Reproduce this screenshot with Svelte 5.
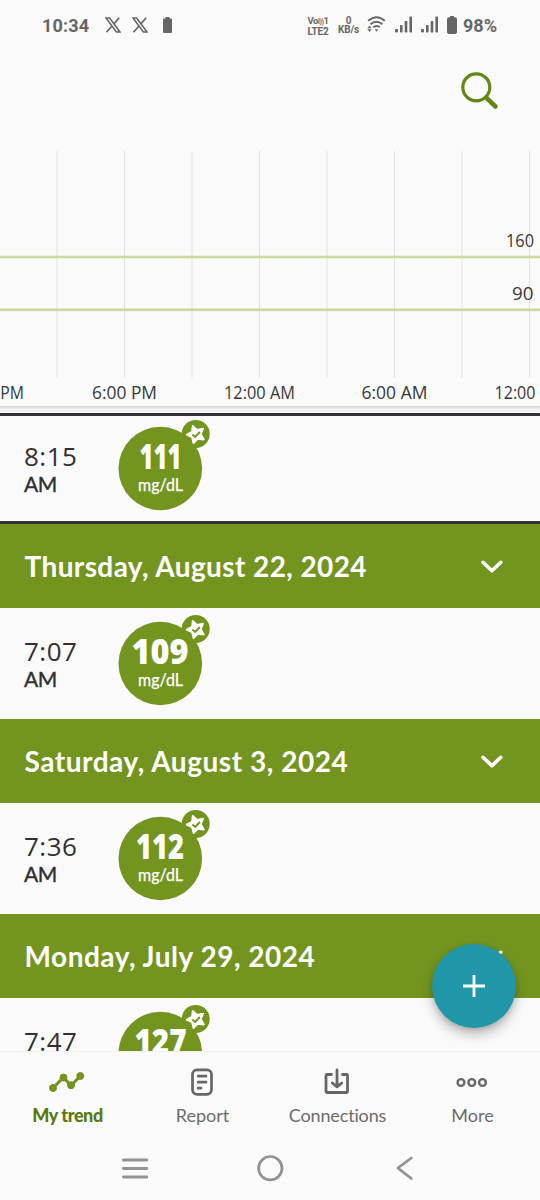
<script>
  const gridLines = [57, 124.5, 192, 259.5, 327, 394.5, 462, 529.5];
  const hours = [
    { x: -35, label: '3:00 PM', width: 59 },
    { x: 92, label: '6:00 PM', width: 65 },
    { x: 224, label: '12:00 AM', width: 71 },
    { x: 361.5, label: '6:00 AM', width: 66 },
    { x: 494.5, label: '12:00', width: 41 }
  ];
  const days = [
    { title: null, time: '8:15', value: '111', width: 42, x: 42.5 },
    { title: 'Thursday, August 22, 2024', spacing: 0.4, time: '7:07', value: '109', width: 57, x: 42 },
    { title: 'Saturday, August 3, 2024', spacing: 0.54, time: '7:36', value: '112', width: 48, x: 42 },
    { title: 'Monday, July 29, 2024', spacing: 0.52, time: '7:47', value: '127', width: 52, x: 42.5 }
  ];
</script>

{#snippet xLogo()}
  <svg width="16" height="16" viewBox="0 0 16 16" fill="none" stroke="#666">
    <path d="M1 1h3.6L15 15h-3.6z" stroke-width="1.5" />
    <path d="M14.2 .8 9 6.8M6.8 9.3 1.4 15.2" stroke-width="1.7" />
  </svg>
{/snippet}

{#snippet signal()}
  <svg width="18" height="17" viewBox="0 0 18 17" fill="#666">
    <rect x="0" y="13" width="3" height="3.4" rx=".8" />
    <rect x="5" y="9" width="2.6" height="7.4" rx=".6" />
    <rect x="9.7" y="5" width="2.6" height="11.4" rx=".6" />
    <rect x="14.4" y=".6" width="2.6" height="15.8" rx=".6" />
  </svg>
{/snippet}

<div class="screen">
  <header class="status">
    <span class="clock">10:34</span>
    {@render xLogo()}
    {@render xLogo()}
    <svg class="cell" width="9" height="16" viewBox="0 0 9 16" fill="#666"><path d="M2.5 0h4v1.5H8q1 0 1 1V15q0 1-1 1H1q-1 0-1-1V2.500q0-1 1-1h1.500z" /></svg>
    <span class="spacer"></span>
    <div class="tiny volte"><span>Vo<i>l))</i>1</span><span>LTE2</span></div>
    <div class="tiny rate"><span>0</span><span>KB/s</span></div>
    <svg class="wifi" width="19" height="17" viewBox="0 0 19 17" fill="none" stroke="#666" stroke-width="1.9">
      <path d="M1.200 4.800Q9.500-2.400 17.800 4.800M3.500 8.200q6-5 12 0M6.300 11.200q3.200-2.600 6.500 0" />
      <path d="M7.600 13.200h3.800L9.500 15.800z" fill="#666" stroke="none" />
      <path d="M.4 12.300 2.500 9.600 4.600 12.300zM.4 13.200 2.500 15.900 4.600 13.200z" fill="#666" stroke="none" />
    </svg>
    {@render signal()}
    {@render signal()}
    <svg class="cell2" width="10" height="18" viewBox="0 0 10 18" fill="#666"><path d="M3 0h4v1.300H8Q10 1.300 10 3V16q0 2-2 2H2q-2 0-2-2V3q0-1.700 2-1.700h1z" /></svg>
    <span class="percent">98%</span>
  </header>

  <div class="toolbar">
    <svg width="40" height="40" viewBox="0 0 40 40" fill="none" stroke="#648617">
      <circle cx="16.300" cy="17.300" r="13.500" stroke-width="3.200" />
      <path d="M26.200 27.600 35.500 36.500" stroke-width="4.600" stroke-linecap="round" />
    </svg>
  </div>

  <svg class="chart" width="540" height="255" viewBox="0 151 540 255">
    {#each gridLines as x}
      <rect x={x - 0.500} y="151" width="1" height="227" fill="#e1e1e2" />
    {/each}
    <rect y="255.700" width="540" height="2.600" fill="#c6dc9f" />
    <rect y="308.500" width="540" height="2.600" fill="#c6dc9f" />
    <text x="506" y="247.300" textLength="28" lengthAdjust="spacingAndGlyphs">160</text>
    <text x="512" y="300.300" textLength="21.500" lengthAdjust="spacingAndGlyphs">90</text>
    {#each hours as h}
      <text x={h.x} y="399.300" textLength={h.width} lengthAdjust="spacingAndGlyphs">{h.label}</text>
    {/each}
  </svg>
  <div class="edge"></div>

  <main>
    {#each days as day}
      {#if day.title}
        <div class="day">
          <span style="letter-spacing: {day.spacing}px">{day.title}</span>
          <svg width="24" height="16" viewBox="0 0 24 16" fill="none" stroke="#fff" stroke-width="3.600" stroke-linecap="round" stroke-linejoin="round"><path d="M3 4.300 11.900 12.800 20.800 4.300" /></svg>
        </div>
      {/if}
      <div class="entry" class:current={!day.title}>
        <div class="time"><span>{day.time}</span><small>AM</small></div>
        <svg class="bubble" width="96" height="96" viewBox="0 0 96 96">
          <circle cx="42.300" cy="51.500" r="41.800" fill="#73941f" />
          <circle cx="77.700" cy="17" r="14" fill="#73941f" />
          <g transform="translate(77.700 17.200)">
            <path d="M-3-8.400 1.300-4.200 7.400-5.600 5 0 8.100 5.300 2 4.600-2.200 8.800-3.600 3-9 .4-3.600-2.300z" fill="#fff" stroke="#fff" stroke-width="1.800" stroke-linejoin="round" />
            <path d="M-3.300.3-.5 2.700 4.200-2.200" fill="none" stroke="#73941f" stroke-width="2" />
          </g>
          <text class="value" x={day.x} y="51.500" text-anchor="middle" textLength={day.width} lengthAdjust="spacingAndGlyphs">{day.value}</text>
          <text class="unit" x="42.500" y="74" text-anchor="middle" textLength="45" lengthAdjust="spacingAndGlyphs">mg/dL</text>
        </svg>
      </div>
    {/each}
    <button class="add" aria-label="Add entry">
      <svg width="22" height="22" viewBox="0 0 22 22" stroke="#fff" stroke-width="2.800"><path d="M11 0v22M0 11h22" /></svg>
    </button>
  </main>

  <nav class="tabs">
    <div class="tab active">
      <svg width="36" height="30" viewBox="0 0 36 30" fill="#73941f" stroke="#73941f">
        <path d="M4 21 14.500 10.500 22 18.500 31.300 9" fill="none" stroke-width="3" />
        <circle cx="4" cy="21" r="3.500" /><circle cx="14.500" cy="10.500" r="3.500" /><circle cx="22" cy="18.200" r="3.500" /><circle cx="31.300" cy="9" r="3.500" />
      </svg>
      <span>My trend</span>
    </div>
    <div class="tab">
      <svg width="36" height="30" viewBox="0 0 36 30" fill="none" stroke="#666" stroke-width="2.700" stroke-linecap="round">
        <rect x="8.500" y="2.800" width="19" height="24.500" rx="4.500" />
        <path d="M14.200 9.200H22M14.200 15.200H22M14.200 21.200H17" />
      </svg>
      <span>Report</span>
    </div>
    <div class="tab">
      <svg width="36" height="30" viewBox="0 0 36 30" fill="none" stroke="#666" stroke-width="2.800" stroke-linecap="round" stroke-linejoin="round">
        <path d="M12.500 7.500H8Q7 7.500 7 8.500V24.500Q7 25.500 8 25.500H27.500Q28.500 25.500 28.500 24.500V8.500Q28.500 7.500 27.500 7.500H23.500M18 3V19.800M13.300 16 18 19.800 22.700 16" />
      </svg>
      <span class="narrow">Connections</span>
    </div>
    <div class="tab">
      <svg width="36" height="30" viewBox="0 0 36 30" fill="none" stroke="#666" stroke-width="2.400">
        <circle cx="7" cy="15.500" r="3.400" /><circle cx="17.800" cy="15.500" r="3.400" /><circle cx="28.500" cy="15.500" r="3.400" />
      </svg>
      <span>More</span>
    </div>
  </nav>

  <footer>
    <svg width="28" height="28" viewBox="0 0 28 28" stroke="#929292" stroke-width="2.800" stroke-linecap="round"><path d="M2.400 6H25.800M2.400 14.500H25.800M2.400 23H25.800" /></svg>
    <svg width="28" height="28" viewBox="0 0 28 28" fill="none" stroke="#929292" stroke-width="2.700"><circle cx="14.300" cy="14.200" r="11.700" /></svg>
    <svg width="28" height="28" viewBox="0 0 28 28" fill="none" stroke="#929292" stroke-width="2.800" stroke-linecap="round" stroke-linejoin="round"><path d="M20.300 4 6.800 14 20.300 24.500" /></svg>
  </footer>
</div>

<style>
  :global(body) { background: #fafafa; }
  .screen { width: 540px; height: 1200px; overflow: hidden; display: flex; flex-direction: column; background: #fafafa; font-family: Lato, sans-serif; color: #303033; font-variant-ligatures: none; }
  svg { display: block; flex: none; }
  .status { height: 50px; flex: none; box-sizing: border-box; padding: 0 43px 1px 42px; display: flex; align-items: center; color: #666; font-family: Roboto, sans-serif; font-weight: 700; }
  .clock { font-size: 18px; width: 63px; letter-spacing: .2px; padding-top: 2px; }
  .status svg + svg { margin-left: 11px; }
  .status svg.cell { margin-left: 15px; }
  .spacer { flex: 1; }
  .tiny { display: flex; flex-direction: column; align-items: center; font-size: 10px; line-height: 9px; height: 18px; white-space: nowrap; letter-spacing: -.2px; }
  .volte { width: 21px; margin-right: 9px; }
  .tiny.volte span:first-child { letter-spacing: -.4px; font-size: 9.500px; }
  .volte i { font-style: normal; font-size: 7px; }
  .rate { width: 22px; margin-right: 7px; }
  .status .wifi + svg { margin-left: 9px; }
  .status .wifi + svg + svg { margin-left: 8.500px; }
  .status svg.cell2 { margin-left: 8px; }
  .percent { font-size: 18px; padding: 2px 0 0 6px; width: 34px; }
  .toolbar { height: 101px; flex: none; display: flex; justify-content: flex-end; padding: 20px 40px 0 0; box-sizing: border-box; }
  .chart { font-family: "Open Sans", sans-serif; font-size: 17.300px; fill: #38383a; font-weight: 400; }
  .edge { height: 7px; flex: none; background: linear-gradient(#d6d6d8, #f1f1f2 45%, #f7f7f8); }
  main { flex: 1; min-height: 0; overflow: hidden; position: relative; }
  .day { height: 84px; background: #73941f; color: #fff; display: flex; align-items: center; justify-content: space-between; padding: 0 36px 0 24.500px; box-sizing: border-box; font-size: 28px; font-weight: 700; white-space: nowrap; }
  .entry { height: 111px; box-sizing: border-box; display: flex; align-items: center; padding-left: 24px; }
  .entry.current { border: solid #333136; border-width: 3px 0; }
  .time { width: 94px; display: flex; flex-direction: column; font-size: 26px; line-height: 27px; padding-top: 3px; }
  .time span { font-family: "Open Sans", sans-serif; font-size: 26px; letter-spacing: .5px; }
  .time small { font-size: 21px; line-height: 27px; font-weight: 400; -webkit-text-stroke: .4px #303033; letter-spacing: -.5px; }
  .bubble { margin-top: -7px; }
  .value { font-family: "Open Sans", sans-serif; font-size: 35px; font-weight: 800; fill: #fff; }
  .unit { font-size: 16.500px; fill: #fff; stroke: #fff; stroke-width: .25px; }
  .add { position: absolute; left: 432px; top: 531px; width: 84px; height: 84px; padding: 0; border: 0; border-radius: 50%; background: #2097a8; display: flex; align-items: center; justify-content: center; box-shadow: 0 7px 12px rgba(0, 0, 0, .24), 0 2px 5px rgba(0, 0, 0, .12); }
  .tabs { height: 85px; flex: none; box-sizing: border-box; border-top: 1px solid #f1f1f1; display: grid; grid-template-columns: repeat(4, 1fr); padding-top: 15px; }
  .tab { display: flex; flex-direction: column; align-items: center; color: #6c6c6c; font-size: 18px; line-height: 22px; gap: 7px; }
  .tab svg { margin-left: -1px; }
  .narrow { letter-spacing: -.15px; }
  .active { color: #587a0c; font-weight: 900; letter-spacing: -.4px; }
  footer { height: 64px; flex: none; display: flex; justify-content: center; gap: 107px; padding-top: 18px; box-sizing: border-box; }
</style>
